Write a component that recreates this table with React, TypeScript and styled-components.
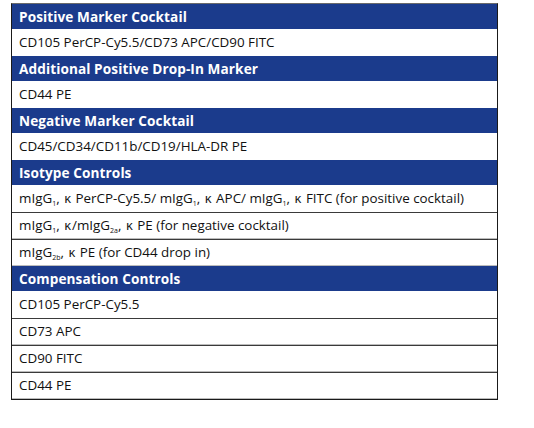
import styled, { createGlobalStyle } from "styled-components"

const GlobalStyle = createGlobalStyle`
    body {
        margin: 0;
        background: #ffffff;
        font-family: "Open Sans", "Noto Sans", "Liberation Sans", sans-serif;
    }
`

const Page = styled.div`
    padding: 3px 0 0 11px;
    width: 534px;
    height: 428px;
    box-sizing: border-box;
`

const Table = styled.div`
    display: flex;
    flex-direction: column;
    width: 487px;
    border-left: 1.5px solid #1a1a1a;
    border-right: 1.5px solid #1a1a1a;
    border-bottom: 1.5px solid #1a1a1a;
    border-top: 1.5px solid #6a6a6a;
    box-sizing: border-box;
`

const Header = styled.div`
    display: flex;
    align-items: center;
    height: 25px;
    padding-left: 7px;
    background-color: #1b3b8c;
    color: #ffffff;
    font-size: 13.6px;
    font-weight: 700;
    letter-spacing: 0.1px;
    box-sizing: border-box;
`

const Row = styled.div<{ $first?: boolean }>`
    display: flex;
    align-items: center;
    height: 27px;
    padding-left: 7px;
    padding-bottom: 1px;
    color: #111111;
    font-size: 13.4px;
    font-weight: 500;
    box-sizing: border-box;
    border-top: ${p => p.$first ? "none" : "1.5px solid #3a3a3a"};
    border-bottom: ${p => p.$first ? "none" : "0.5px solid #bcbcbc"};
`

const Sub = styled.sub`
    font-size: 7px;
    vertical-align: -3px;
    line-height: 0;
`

const Kappa = styled.span`
    font-size: 13px;
    margin: 0 1px;
`

const sections = [
    { title: "Positive Marker Cocktail", rows: ["CD105 PerCP-Cy5.5/CD73 APC/CD90 FITC"] },
    { title: "Additional Positive Drop-In Marker", rows: ["CD44 PE"] },
    { title: "Negative Marker Cocktail", rows: ["CD45/CD34/CD11b/CD19/HLA-DR PE"] },
]

const compensation = ["CD105 PerCP-Cy5.5", "CD73 APC", "CD90 FITC", "CD44 PE"]

export default function App() {
    return (
        <Page>
            <GlobalStyle />
            <Table>
                {sections.map(s => (
                    <div key={s.title}>
                        <Header>{s.title}</Header>
                        {s.rows.map(r => <Row key={r} $first>{r}</Row>)}
                    </div>
                ))}
                <Header>Isotype Controls</Header>
                <Row $first>
                    <span>mIgG<Sub>1</Sub>, <Kappa>κ</Kappa> PerCP-Cy5.5/ mIgG<Sub>1</Sub>, <Kappa>κ</Kappa> APC/ mIgG<Sub>1</Sub>, <Kappa>κ</Kappa> FITC (for positive cocktail)</span>
                </Row>
                <Row>
                    <span>mIgG<Sub>1</Sub>, <Kappa>κ</Kappa>/mIgG<Sub>2a</Sub>, <Kappa>κ</Kappa> PE (for negative cocktail)</span>
                </Row>
                <Row>
                    <span>mIgG<Sub>2b</Sub>, <Kappa>κ</Kappa> PE (for CD44 drop in)</span>
                </Row>
                <Header>Compensation Controls</Header>
                {compensation.map((c, i) => <Row key={c} $first={i === 0}>{c}</Row>)}
            </Table>
        </Page>
    )
}
